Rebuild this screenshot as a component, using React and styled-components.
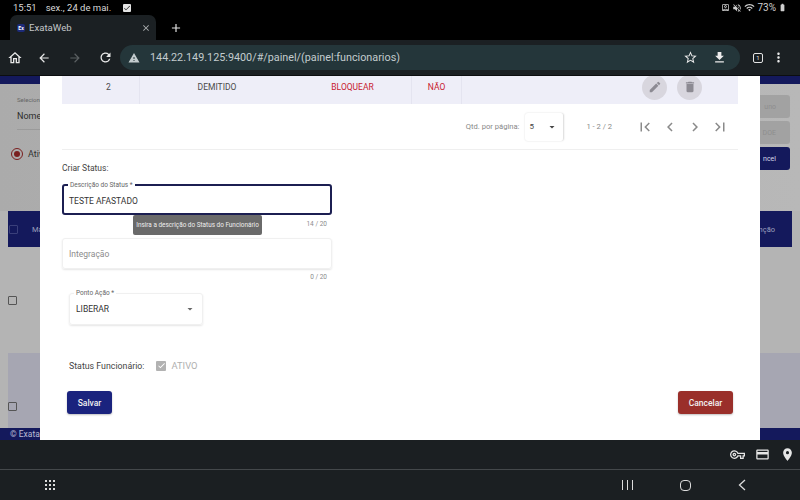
import React from 'react'
import styled, { createGlobalStyle } from 'styled-components'
import {
	MdAdd, MdArrowBack, MdArrowForward, MdBatteryFull, MdCheck, MdChevronLeft, MdChevronRight,
	MdClose, MdCreditCard, MdDelete, MdEdit, MdFileDownload, MdFirstPage, MdLastPage,
	MdLocationOn, MdMoreVert, MdOutlineHome, MdOutlineVpnKey, MdRefresh, MdStarBorder,
	MdVolumeOff, MdWarning, MdWifi, MdOutlineAccountBox, MdArrowDropDown,
} from 'react-icons/md'

const GlobalStyle = createGlobalStyle`
	html, body { margin: 0; padding: 0; background: #000; }
	body { width: 800px; height: 500px; overflow: hidden; font-family: Roboto, 'Liberation Sans', sans-serif; }
	* { box-sizing: border-box; }
`

const Shell = styled.div`
	width: 800px;
	height: 500px;
	display: flex;
	flex-direction: column;
`

/* android + chrome chrome */
const StatusBar = styled.div`
	height: 15px;
	background: #000;
	color: #d8d8d8;
	font-size: 9.5px;
	display: flex;
	align-items: center;
	padding: 0 13px 0 13px;
	gap: 9px;
`
const Notice = styled.span`
	width: 8px;
	height: 8px;
	background: #e4e4e4;
	border-radius: 1px;
	color: #111;
	display: flex;
	align-items: center;
	justify-content: center;
	margin-left: 3px;
`
const StatusRight = styled.div`
	margin-left: auto;
	display: flex;
	align-items: center;
	gap: 2px;
	font-size: 10px;
	color: #cfcfcf;
`
const TabStrip = styled.div`
	height: 25px;
	background: #000;
	display: flex;
	align-items: flex-end;
	padding-left: 10px;
	color: #d8d8d8;
`
const Tab = styled.div`
	width: 146px;
	height: 25px;
	background: #1b2023;
	border-radius: 7px 7px 0 0;
	display: flex;
	align-items: center;
	padding: 0 5px 0 7px;
	font-size: 9.6px;
	color: #c4c7c9;
	gap: 4px;
`
const Favicon = styled.span`
	width: 8px;
	height: 8px;
	border-radius: 2px;
	background: #1c2a78;
	color: #fff;
	font-size: 5px;
	font-weight: 700;
	display: flex;
	align-items: center;
	justify-content: center;
`
const TabClose = styled(MdClose)`
	margin-left: auto;
	color: #b0b3b5;
`
const NewTab = styled(MdAdd)`
	margin: 0 0 5px 13px;
	color: #e4e4e4;
`
const Toolbar = styled.div`
	height: 36px;
	background: #1b2023;
	display: flex;
	align-items: center;
	color: #e6e6e6;
	border-bottom: 1px solid #0c0e10;
`
const ToolIcon = styled.span`
	display: flex;
	width: ${p => p.$w}px;
	justify-content: center;
	color: ${p => p.$dim ? '#5b6063' : '#e8e8e8'};
`
const UrlBar = styled.div`
	width: 620px;
	height: 25px;
	background: #24363a;
	border-radius: 13px;
	display: flex;
	align-items: center;
	padding: 0 12px 0 8px;
	font-size: 10.8px;
	color: #c3ccce;
`
const UrlText = styled.span`
	margin-left: 10px;
`
const UrlIcons = styled.div`
	margin-left: auto;
	display: flex;
	gap: 14px;
	color: #ececec;
	transform: translateX(-1px);
`
const TabCount = styled.span`
	width: 10px;
	height: 10px;
	border: 1px solid #e4e4e4;
	border-radius: 2px;
	font-size: 6px;
	display: flex;
	align-items: center;
	justify-content: center;
	margin-left: 13px;
`
const Accessory = styled.div`
	height: 30px;
	background: #1b1f22;
	border-bottom: 1px solid #44484b;
	display: flex;
	align-items: center;
	justify-content: flex-end;
	gap: 10px;
	padding-right: 5px;
	color: #e6e6e6;
`
const NavBar = styled.div`
	flex: 1;
	background: #1b1f22;
	display: flex;
	align-items: center;
	color: #dcdcdc;
	padding-left: 45px;
`
const Dots = styled.span`
	display: grid;
	grid-template-columns: repeat(3, 2px);
	gap: 2px;
	& i { width: 2px; height: 2px; background: #dcdcdc; }
`
const NavGlyphs = styled.div`
	margin-left: auto;
	display: flex;
	align-items: center;
	gap: 47px;
	padding-right: 54px;
`
const Bars = styled.span`
	display: flex;
	gap: 3.5px;
	& i { width: 1.3px; height: 10px; background: #dcdcdc; }
`
const Ring = styled.span`
	width: 11px;
	height: 11px;
	border: 1.3px solid #dcdcdc;
	border-radius: 4px;
`

/* page area */
const Viewport = styled.div`
	position: relative;
	height: 364px;
	background: #b4b4b4;
	overflow: hidden;
`
const PageBand = styled.div`
	height: 8px;
	background: #14195c;
`
const FilterRow = styled.div`
	height: 127px;
	display: flex;
	justify-content: space-between;
	padding: 10px 10px 0 17px;
	background: linear-gradient(90deg, #ababab, #b8b8b8);
`
const FilterLeft = styled.div`
	display: flex;
	flex-direction: column;
	width: 60px;
`
const FilterLabel = styled.span`
	font-size: 6px;
	color: #666;
	margin-top: 2px;
`
const FilterValue = styled.span`
	font-size: 9px;
	color: #2c2c2c;
	margin-top: 8px;
	padding-bottom: 8px;
	border-bottom: 1px solid #9a9a9a;
`
const RadioRow = styled.div`
	display: flex;
	align-items: center;
	gap: 5px;
	margin-top: 18px;
	margin-left: -6px;
	font-size: 9px;
	color: #333;
`
const Radio = styled.span`
	width: 12px;
	height: 12px;
	border: 1.5px solid #7a1f1f;
	border-radius: 50%;
	display: flex;
	align-items: center;
	justify-content: center;
	&::after { content: ''; width: 6px; height: 6px; border-radius: 50%; background: #7a1f1f; }
`
const ActionStack = styled.div`
	width: 60px;
	display: flex;
	flex-direction: column;
	gap: 3px;
	margin-top: 1px;
`
const StackButton = styled.span`
	height: ${p => p.$h}px;
	border-radius: 3px;
	background: ${p => p.$blue ? '#14195c' : '#a2a2a2'};
	color: ${p => p.$blue ? '#d8d8e8' : '#8e8e8e'};
	font-size: 7px;
	display: flex;
	align-items: center;
	justify-content: flex-end;
	padding-right: 14px;
`
const PageHead = styled.div`
	height: 36px;
	margin: 0 8px;
	background: #14195c;
	color: #9da0bd;
	font-size: 7.5px;
	display: flex;
	align-items: center;
	justify-content: space-between;
	padding: 0 17px 0 0;
`
const HeadLeft = styled.div`
	display: flex;
	align-items: center;
	gap: 14px;
	margin-left: 1px;
`
const PageRow = styled.div`
	height: ${p => p.$h}px;
	margin-left: 8px;
	padding-top: ${p => p.$pad}px;
	background: ${p => p.$tint ? '#a6a6b2' : 'transparent'};
`
const RowBox = styled.span`
	display: block;
	width: 9px;
	height: 9px;
	border: 1.5px solid #555;
	border-radius: 1px;
`
const HeadBox = styled(RowBox)`
	border-color: #3a3f7a;
`
const PageFoot = styled.div`
	height: 12px;
	background: #14195c;
	color: #b9bbd4;
	font-size: 8.5px;
	display: flex;
	align-items: center;
	padding: 0 0 1px 10px;
`

/* dialog */
const Dialog = styled.div`
	position: absolute;
	left: 40px;
	top: 0;
	width: 720px;
	height: 364px;
	background: #fff;
	padding: 0 22px;
	color: #333;
`
const DataRow = styled.div`
	height: 28px;
	background: #eeeef8;
	display: grid;
	grid-template-columns: 78px 154px 118px 50px 1fr;
	align-items: center;
	font-size: 8.5px;
	text-align: center;
	color: #444;
`
const Cell = styled.span`
	height: 100%;
	display: flex;
	align-items: center;
	justify-content: center;
	padding: 0 0 7px ${p => p.$inset || 0}px;
	color: ${p => p.$danger ? '#c8202f' : '#4a4a4a'};
	border-right: ${p => p.$rule ? '1px solid #e4e4f0' : 'none'};
`
const RowActions = styled.div`
	height: 100%;
	display: flex;
	align-items: center;
	justify-content: flex-end;
	gap: 10px;
	padding-right: 36px;
`
const RoundAction = styled.span`
	width: 25px;
	height: 25px;
	border-radius: 50%;
	margin-top: -6px;
	background: #d8d6de;
	color: #8c8a92;
	display: flex;
	align-items: center;
	justify-content: center;
`
const Paginator = styled.div`
	height: 46px;
	display: flex;
	align-items: center;
	justify-content: flex-end;
	border-bottom: 1px solid #efefef;
	font-size: 7.6px;
	color: #888;
	padding: 0 9px 0 0;
`
const PageSize = styled.div`
	width: 39px;
	height: 28px;
	margin: 0 22px 0 6px;
	border-radius: 3px;
	border-right: 1px solid #e2e2e2;
	box-shadow: 0 0 2px #ddd;
	display: flex;
	align-items: center;
	justify-content: space-between;
	padding: 0 5px 0 4px;
	font-size: 8px;
	color: #444;
`
const PagerIcons = styled.div`
	display: flex;
	gap: 7px;
	margin-left: 24px;
	color: #8a8a8a;
`
const FormTitle = styled.div`
	font-size: 8.5px;
	color: #444;
	margin-top: 13px;
	line-height: 10px;
`
const Field = styled.div`
	position: relative;
	width: ${p => p.$w}px;
	height: ${p => p.$h}px;
	margin-top: ${p => p.$top}px;
	margin-left: ${p => p.$left || 0}px;
	border: ${p => p.$focus ? '2px solid #1c1f52' : '1px solid #f0f0f0'};
	border-radius: 3px;
	box-shadow: ${p => p.$focus ? 'none' : '0 1px 2px #e6e6e6'};
	display: flex;
	align-items: center;
	justify-content: space-between;
	padding: ${p => p.$focus ? '2px 5px 0' : '0 6px'};
	font-size: 8.5px;
	color: ${p => p.$muted ? '#8c8c8c' : '#333'};
`
const Legend = styled.span`
	position: absolute;
	left: 4px;
	top: -5px;
	padding: 0 2px;
	background: #fff;
	font-size: 6.5px;
	line-height: 8px;
	color: #666;
`
const Counter = styled.div`
	width: 265px;
	text-align: right;
	font-size: 6.5px;
	line-height: 9px;
	color: #8c8c8c;
	margin-top: ${p => p.$top}px;
`
const Hint = styled.div`
	position: absolute;
	left: 93px;
	top: 139px;
	width: 129px;
	height: 20px;
	border-radius: 2px;
	background: #6a6a6a;
	color: #eee;
	font-size: 6.4px;
	display: flex;
	align-items: center;
	justify-content: center;
`
const StatusLine = styled.div`
	display: flex;
	align-items: center;
	margin: 35px 0 0 7px;
	font-size: 8.8px;
	color: #444;
`
const DisabledCheck = styled.span`
	width: 10px;
	height: 10px;
	margin-left: 12px;
	border-radius: 1px;
	background: #b2b2b2;
	color: #fff;
	display: flex;
	align-items: center;
	justify-content: center;
`
const CheckLabel = styled.span`
	margin-left: 5px;
	font-size: 9.4px;
	color: #b0b0b0;
`
const Actions = styled.div`
	display: flex;
	justify-content: space-between;
	margin: 20px 5px 0;
`
const Button = styled.span`
	height: 23px;
	width: ${p => p.$w}px;
	border-radius: 3px;
	background: ${p => p.$bg};
	color: #f2f2f2;
	font-size: 8.5px;
	font-weight: 500;
	display: flex;
	align-items: center;
	justify-content: center;
	box-shadow: 0 1px 2px rgba(0, 0, 0, 0.25);
`

const BackgroundPage = () => (
	<>
		<PageBand />
		<FilterRow>
			<FilterLeft>
				<FilterLabel>Selecionar</FilterLabel>
				<FilterValue>Nome</FilterValue>
				<RadioRow><Radio />Ativo</RadioRow>
			</FilterLeft>
			<ActionStack>
				<StackButton $h={23}>uno</StackButton>
				<StackButton $h={23}>DOE</StackButton>
				<StackButton $h={23} $blue>ncel</StackButton>
			</ActionStack>
		</FilterRow>
		<PageHead>
			<HeadLeft><HeadBox />Ma</HeadLeft>
			<span>nção</span>
		</PageHead>
		<PageRow $h={106} $pad={49}><RowBox /></PageRow>
		<PageRow $h={75} $pad={49} $tint><RowBox /></PageRow>
		<PageFoot>© Exata</PageFoot>
	</>
)

const App = () => (
	<Shell>
		<GlobalStyle />
		<StatusBar>
			<span>15:51</span>
			<span>sex., 24 de mai.</span>
			<Notice><MdCheck size={8} /></Notice>
			<StatusRight>
				<MdOutlineAccountBox size={9} />
				<MdVolumeOff size={10} />
				<MdWifi size={11} />
				73%
				<MdBatteryFull size={9} />
			</StatusRight>
		</StatusBar>
		<TabStrip>
			<Tab>
				<Favicon>Ex</Favicon>
				ExataWeb
				<TabClose size={10} />
			</Tab>
			<NewTab size={14} />
		</TabStrip>
		<Toolbar>
			<ToolIcon $w={29}><MdOutlineHome size={16} /></ToolIcon>
			<ToolIcon $w={30}><MdArrowBack size={14} /></ToolIcon>
			<ToolIcon $w={31} $dim><MdArrowForward size={14} /></ToolIcon>
			<ToolIcon $w={30}><MdRefresh size={15} /></ToolIcon>
			<UrlBar>
				<MdWarning size={12} />
				<UrlText>144.22.149.125:9400/#/painel/(painel:funcionarios)</UrlText>
				<UrlIcons>
					<MdStarBorder size={15} />
					<MdFileDownload size={15} />
				</UrlIcons>
			</UrlBar>
			<TabCount>1</TabCount>
			<ToolIcon $w={31}><MdMoreVert size={15} /></ToolIcon>
		</Toolbar>
		<Viewport>
			<BackgroundPage />
			<Dialog>
				<DataRow>
					<Cell $rule $inset={16}>2</Cell>
					<Cell>DEMITIDO</Cell>
					<Cell $rule $danger>BLOQUEAR</Cell>
					<Cell $rule $danger>NÃO</Cell>
					<RowActions>
						<RoundAction><MdEdit size={14} /></RoundAction>
						<RoundAction><MdDelete size={14} /></RoundAction>
					</RowActions>
				</DataRow>
				<Paginator>
					Qtd. por página:
					<PageSize>5<MdArrowDropDown size={12} /></PageSize>
					1 - 2 / 2
					<PagerIcons>
						<MdFirstPage size={18} />
						<MdChevronLeft size={18} />
						<MdChevronRight size={18} />
						<MdLastPage size={18} />
					</PagerIcons>
				</Paginator>
				<FormTitle>Criar Status:</FormTitle>
				<Field $w={270} $h={31} $top={11} $focus>
					<Legend>Descrição do Status *</Legend>
					TESTE AFASTADO
				</Field>
				<Counter $top={5}>14 / 20</Counter>
				<Field $w={270} $h={31} $top={9} $muted>Integração</Field>
				<Counter $top={4}>0 / 20</Counter>
				<Field $w={134} $h={32} $top={11} $left={7}>
					<Legend>Ponto Ação *</Legend>
					LIBERAR
					<MdArrowDropDown size={12} color="#666" />
				</Field>
				<StatusLine>
					Status Funcionário:
					<DisabledCheck><MdCheck size={9} /></DisabledCheck>
					<CheckLabel>ATIVO</CheckLabel>
				</StatusLine>
				<Actions>
					<Button $w={45} $bg="#1a237e">Salvar</Button>
					<Button $w={55} $bg="#9a2f2a">Cancelar</Button>
				</Actions>
				<Hint>Insira a descrição do Status do Funcionário</Hint>
			</Dialog>
		</Viewport>
		<Accessory>
			<MdOutlineVpnKey size={15} />
			<MdCreditCard size={15} />
			<MdLocationOn size={15} />
		</Accessory>
		<NavBar>
			<Dots>{Array.from({ length: 9 }, (_, i) => <i key={i} />)}</Dots>
			<NavGlyphs>
				<Bars><i /><i /><i /></Bars>
				<Ring />
				<svg width="8" height="12" viewBox="0 0 8 12" fill="none" stroke="#dcdcdc" strokeWidth="1.3">
					<path d="M7 1 L1.5 6 L7 11" />
				</svg>
			</NavGlyphs>
		</NavBar>
	</Shell>
)

export default App
